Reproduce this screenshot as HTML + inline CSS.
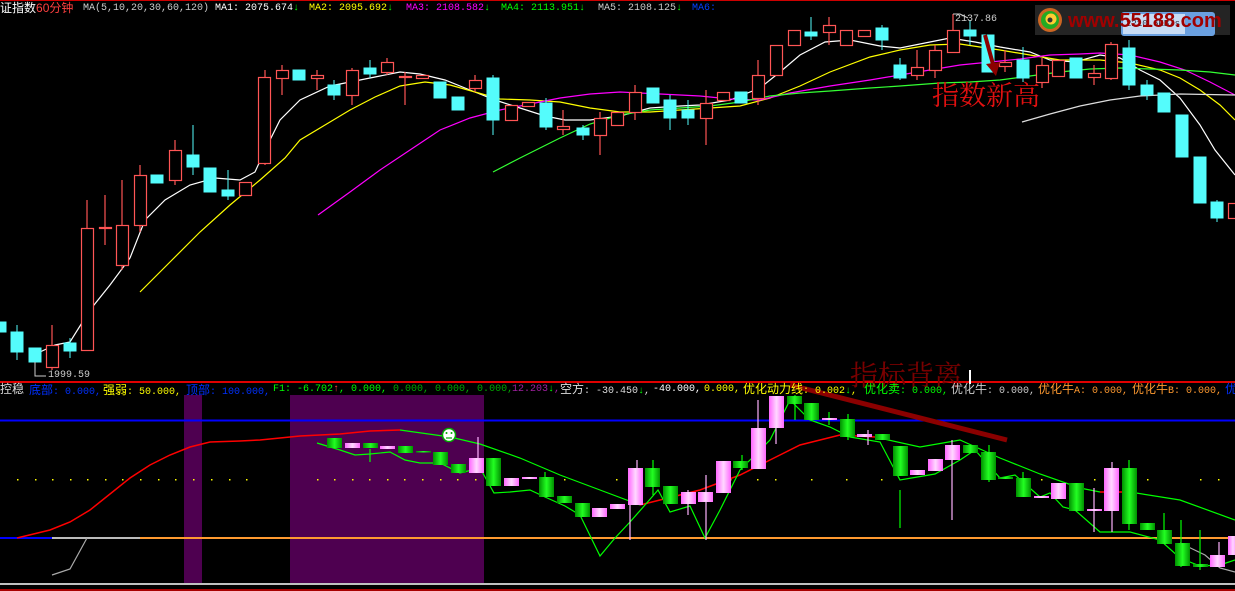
<!DOCTYPE html>
<html><head><meta charset="utf-8"><style>
html,body{margin:0;padding:0;background:#000;}
#w{position:relative;width:1235px;height:591px;overflow:hidden;background:#000;font-family:"Liberation Mono","WenQuanYi Zen Hei",monospace;font-size:10px;}
.t{position:absolute;white-space:nowrap;line-height:12px;}
.c{font-family:"Liberation Sans","WenQuanYi Zen Hei","Noto Sans CJK SC",sans-serif;font-size:12px;}
svg{position:absolute;left:0;top:0;}
</style></head><body><div id="w">
<svg width="1235" height="591" viewBox="0 0 1235 591">
<defs>
<linearGradient id="pk" x1="0" x2="1"><stop offset="0" stop-color="#ff66ff"/><stop offset="0.5" stop-color="#ffd8ff"/><stop offset="1" stop-color="#ff66ff"/></linearGradient>
<linearGradient id="gn" x1="0" x2="1"><stop offset="0" stop-color="#009000"/><stop offset="0.5" stop-color="#22ff22"/><stop offset="1" stop-color="#009000"/></linearGradient>
</defs>
<line x1="0" y1="0.5" x2="1235" y2="0.5" stroke="#c00" stroke-width="1"/>
<rect x="184" y="395" width="18" height="188" fill="#4e0050"/>
<rect x="290" y="395" width="194" height="188" fill="#4e0050"/>
<line x1="0" y1="382" x2="1235" y2="382" stroke="#e00000" stroke-width="2"/>
<line x1="0" y1="420.5" x2="1235" y2="420.5" stroke="#0000ff" stroke-width="2"/>
<line x1="0" y1="538" x2="52" y2="538" stroke="#0000ff" stroke-width="2"/>
<line x1="52" y1="538" x2="140" y2="538" stroke="#bbb" stroke-width="2"/>
<line x1="140" y1="538" x2="1235" y2="538" stroke="#ff9a30" stroke-width="2"/>
<line x1="0" y1="584" x2="1235" y2="584" stroke="#fff" stroke-width="1.5"/>
<line x1="0" y1="590" x2="1235" y2="590" stroke="#e00000" stroke-width="1.5"/>
<g fill="#ff0">
<rect x="17" y="479" width="1.5" height="1.5"/><rect x="35" y="479" width="1.5" height="1.5"/><rect x="52" y="479" width="1.5" height="1.5"/><rect x="70" y="479" width="1.5" height="1.5"/><rect x="87" y="479" width="1.5" height="1.5"/><rect x="105" y="479" width="1.5" height="1.5"/><rect x="122" y="479" width="1.5" height="1.5"/><rect x="140" y="479" width="1.5" height="1.5"/><rect x="158" y="479" width="1.5" height="1.5"/><rect x="175" y="479" width="1.5" height="1.5"/><rect x="193" y="479" width="1.5" height="1.5"/><rect x="211" y="479" width="1.5" height="1.5"/><rect x="229" y="479" width="1.5" height="1.5"/><rect x="246" y="479" width="1.5" height="1.5"/><rect x="317" y="479" width="1.5" height="1.5"/><rect x="334" y="479" width="1.5" height="1.5"/><rect x="352" y="479" width="1.5" height="1.5"/><rect x="369" y="479" width="1.5" height="1.5"/><rect x="387" y="479" width="1.5" height="1.5"/><rect x="404" y="479" width="1.5" height="1.5"/><rect x="422" y="479" width="1.5" height="1.5"/><rect x="440" y="479" width="1.5" height="1.5"/><rect x="457" y="479" width="1.5" height="1.5"/><rect x="475" y="479" width="1.5" height="1.5"/><rect x="564" y="479" width="1.5" height="1.5"/><rect x="616" y="479" width="1.5" height="1.5"/><rect x="730" y="479" width="1.5" height="1.5"/><rect x="757" y="479" width="1.5" height="1.5"/><rect x="775" y="479" width="1.5" height="1.5"/><rect x="811" y="479" width="1.5" height="1.5"/><rect x="846" y="479" width="1.5" height="1.5"/><rect x="881" y="479" width="1.5" height="1.5"/><rect x="1041" y="479" width="1.5" height="1.5"/><rect x="1094" y="479" width="1.5" height="1.5"/><rect x="1147" y="479" width="1.5" height="1.5"/><rect x="1200" y="479" width="1.5" height="1.5"/><rect x="1218" y="479" width="1.5" height="1.5"/>
</g>
<polyline fill="none" stroke="#f00" stroke-width="1.5" points="17,538 50,530 70,522 90,510 110,494 130,478 150,465 170,455 190,447 210,442 240,441 260,440 300,436 340,434 370,431 400,430"/>
<polyline fill="none" stroke="#0f0" stroke-width="1.2" points="400,430 450,437 480,444 520,458 560,475 600,490 640,505"/>
<polyline fill="none" stroke="#f00" stroke-width="1.5" points="640,505 700,490 740,475 770,460 800,445 840,435 875,437"/>
<polyline fill="none" stroke="#0f0" stroke-width="1.2" points="875,437 920,447 960,440 1000,458 1040,474 1080,488 1100,492"/>
<polyline fill="none" stroke="#f00" stroke-width="1.5" points="1100,492 1130,492"/>
<polyline fill="none" stroke="#0f0" stroke-width="1.2" points="1130,492 1180,500 1235,520"/>
<polyline fill="none" stroke="#0f0" stroke-width="1.2" points="317,443 340,450 355,455 370,454 390,452 405,460 420,463 440,463 460,473 480,468 494,493 510,492 530,490 545,497 565,506 580,515 600,556 615,538 630,522 645,505 658,490 670,512 690,506 705,538 720,510 740,470 755,455 770,440 790,400 810,420 830,427 850,437 880,442 900,480 935,474 960,460 975,450 1000,478 1015,475 1040,497 1050,493 1063,507 1075,510 1100,532 1130,532 1160,540 1180,558 1200,566 1220,565 1235,560"/>
<polyline fill="none" stroke="#aaa" stroke-width="1.2" points="52,575 70,569 87,538"/>
<polyline fill="none" stroke="#aaa" stroke-width="1.2" points="1180,543 1205,555 1220,568 1235,572"/>
<g stroke-width="1.2">
<g stroke="#ffb0ff">
<line x1="478" y1="437" x2="478" y2="473"/><line x1="630" y1="486" x2="630" y2="540"/><line x1="706" y1="475" x2="706" y2="540"/><line x1="758" y1="400" x2="758" y2="468"/><line x1="776" y1="396" x2="776" y2="444"/><line x1="1112" y1="462" x2="1112" y2="532"/><line x1="1094" y1="488" x2="1094" y2="532"/><line x1="1219" y1="542" x2="1219" y2="567"/><line x1="637" y1="460" x2="637" y2="505"/><line x1="688" y1="490" x2="688" y2="515"/><line x1="868" y1="430" x2="868" y2="445"/><line x1="952" y1="440" x2="952" y2="520"/>
</g>
<g stroke="#0f0">
<line x1="653" y1="460" x2="653" y2="495"/><line x1="742" y1="455" x2="742" y2="470"/><line x1="795" y1="395" x2="795" y2="420"/><line x1="829" y1="412" x2="829" y2="425"/><line x1="848" y1="414" x2="848" y2="440"/><line x1="900" y1="490" x2="900" y2="528"/><line x1="989" y1="445" x2="989" y2="482"/><line x1="1023" y1="472" x2="1023" y2="497"/><line x1="1129" y1="460" x2="1129" y2="530"/><line x1="1164" y1="513" x2="1164" y2="537"/><line x1="1181" y1="520" x2="1181" y2="567"/><line x1="1200" y1="530" x2="1200" y2="570"/><line x1="545" y1="472" x2="545" y2="497"/><line x1="370" y1="449" x2="370" y2="462"/>
</g>
</g>
<g fill="url(#pk)">
<rect x="345" y="443" width="15" height="5"/><rect x="380" y="446" width="15" height="3"/><rect x="469" y="458" width="15" height="15"/><rect x="504" y="478" width="15" height="8"/><rect x="522" y="477" width="15" height="2"/><rect x="592" y="508" width="15" height="9"/><rect x="610" y="504" width="15" height="5"/><rect x="628" y="468" width="15" height="37"/><rect x="681" y="492" width="15" height="12"/><rect x="698" y="492" width="15" height="10"/><rect x="716" y="461" width="15" height="32"/><rect x="751" y="428" width="15" height="41"/><rect x="769" y="396" width="15" height="32"/><rect x="857" y="434" width="15" height="3"/><rect x="910" y="470" width="15" height="5"/><rect x="928" y="459" width="15" height="12"/><rect x="945" y="445" width="15" height="15"/><rect x="1034" y="496" width="15" height="2"/><rect x="1051" y="483" width="15" height="16"/><rect x="1087" y="509" width="15" height="2"/><rect x="1104" y="468" width="15" height="43"/><rect x="1210" y="555" width="15" height="12"/><rect x="1228" y="536" width="10" height="19"/><rect x="822" y="418" width="15" height="2"/>
</g>
<g fill="url(#gn)">
<rect x="327" y="438" width="15" height="10"/><rect x="363" y="443" width="15" height="5"/><rect x="398" y="446" width="15" height="7"/><rect x="416" y="451" width="15" height="1.5"/><rect x="433" y="452" width="15" height="13"/><rect x="451" y="464" width="15" height="9"/><rect x="486" y="458" width="15" height="28"/><rect x="539" y="477" width="15" height="20"/><rect x="557" y="496" width="15" height="7"/><rect x="575" y="503" width="15" height="14"/><rect x="645" y="468" width="15" height="19"/><rect x="663" y="486" width="15" height="18"/><rect x="733" y="461" width="15" height="7"/><rect x="787" y="396" width="15" height="8"/><rect x="804" y="403" width="15" height="17"/><rect x="840" y="419" width="15" height="18"/><rect x="875" y="434" width="15" height="6"/><rect x="893" y="446" width="15" height="30"/><rect x="963" y="445" width="15" height="8"/><rect x="981" y="452" width="15" height="28"/><rect x="998" y="477" width="15" height="2"/><rect x="1016" y="478" width="15" height="19"/><rect x="1069" y="483" width="15" height="28"/><rect x="1122" y="468" width="15" height="56"/><rect x="1140" y="523" width="15" height="7"/><rect x="1157" y="530" width="15" height="14"/><rect x="1175" y="543" width="15" height="23"/><rect x="1193" y="564" width="15" height="3"/>
</g>
<circle cx="449" cy="435" r="6.5" fill="#fff" stroke="#0a0" stroke-width="1.5"/>
<circle cx="446.5" cy="433" r="1" fill="#0a0"/><circle cx="451.5" cy="433" r="1" fill="#0a0"/>
<line x1="446" y1="438" x2="452" y2="438" stroke="#0a0" stroke-width="1.2"/>
<polyline fill="none" stroke="#fff" stroke-width="1.2" points="40,352 55,345 70,342 90,310 110,285 130,258 145,220 165,200 190,185 215,178 240,180 255,172 265,150 280,120 300,100 330,86 360,80 380,76 400,72 420,74 445,80 470,90 495,100 520,108 545,116 565,120 590,120 620,116 650,108 680,106 700,105 730,100 760,88 780,72 800,55 825,42 850,40 880,46 900,48 930,42 950,38 975,42 1000,47 1030,52 1050,60 1075,62 1100,55 1120,58 1140,70 1160,80 1180,98 1200,125 1215,150 1235,175"/>
<polyline fill="none" stroke="#ff0" stroke-width="1.2" points="140,292 170,262 200,232 230,205 260,180 285,158 300,140 325,125 350,110 375,97 400,86 425,82 450,85 475,92 500,99 530,100 560,102 590,108 620,112 650,112 680,110 710,108 740,106 770,98 800,86 830,72 870,57 900,50 930,45 960,44 1000,50 1030,55 1060,60 1100,60 1130,63 1160,70 1180,78 1200,90 1220,105 1235,120"/>
<polyline fill="none" stroke="#f0f" stroke-width="1.2" points="318,215 350,192 380,170 410,150 440,130 470,118 500,110 530,104 560,98 590,94 620,92 660,94 700,96 730,99 760,100 790,93 830,86 870,80 900,75 930,70 960,65 990,62 1020,59 1050,55 1080,54 1100,53 1130,55 1160,62 1185,70 1210,82 1235,95"/>
<polyline fill="none" stroke="#3f3" stroke-width="1.2" points="493,172 520,158 560,138 590,124 620,115 650,110 680,108 710,106 740,102 770,96 800,93 830,91 870,88 900,86 940,83 970,82 1000,80 1030,76 1060,72 1090,69 1120,68 1150,69 1180,70 1210,72 1235,75"/>
<polyline fill="none" stroke="#ddd" stroke-width="1.2" points="1022,122 1050,114 1080,106 1110,100 1140,96 1180,94 1235,95"/>
<g fill="#54fcfc" stroke="#54fcfc" stroke-width="1">
<line x1="17" y1="325" x2="17" y2="360"/><line x1="70" y1="338" x2="70" y2="358"/><line x1="193" y1="125" x2="193" y2="175"/><line x1="228" y1="170" x2="228" y2="200"/><line x1="334" y1="80" x2="334" y2="100"/><line x1="370" y1="60" x2="370" y2="78"/><line x1="493" y1="75" x2="493" y2="135"/><line x1="546" y1="98" x2="546" y2="130"/><line x1="670" y1="95" x2="670" y2="130"/><line x1="688" y1="100" x2="688" y2="125"/><line x1="811" y1="17" x2="811" y2="40"/><line x1="882" y1="25" x2="882" y2="50"/><line x1="900" y1="58" x2="900" y2="80"/><line x1="970" y1="20" x2="970" y2="45"/><line x1="1023" y1="47" x2="1023" y2="82"/><line x1="1129" y1="40" x2="1129" y2="90"/><line x1="1147" y1="80" x2="1147" y2="100"/><line x1="1217" y1="200" x2="1217" y2="222"/><line x1="583" y1="125" x2="583" y2="140"/>
<rect x="-4" y="322" width="10" height="10"/><rect x="11" y="332" width="12" height="20"/><rect x="29" y="348" width="12" height="14"/><rect x="64" y="343" width="12" height="8"/><rect x="151" y="175" width="12" height="8"/><rect x="187" y="155" width="12" height="12"/><rect x="204" y="168" width="12" height="24"/><rect x="222" y="190" width="12" height="6"/><rect x="293" y="70" width="12" height="10"/><rect x="328" y="85" width="12" height="10"/><rect x="364" y="68" width="12" height="6"/><rect x="434" y="82" width="12" height="16"/><rect x="452" y="97" width="12" height="13"/><rect x="487" y="78" width="12" height="42"/><rect x="540" y="103" width="12" height="24"/><rect x="577" y="128" width="12" height="7"/><rect x="647" y="88" width="12" height="15"/><rect x="664" y="100" width="12" height="18"/><rect x="682" y="110" width="12" height="8"/><rect x="735" y="92" width="12" height="11"/><rect x="805" y="32" width="12" height="4"/><rect x="876" y="28" width="12" height="12"/><rect x="894" y="65" width="12" height="13"/><rect x="964" y="30" width="12" height="6"/><rect x="982" y="35" width="12" height="37"/><rect x="1017" y="60" width="12" height="18"/><rect x="1070" y="58" width="12" height="20"/><rect x="1123" y="48" width="12" height="37"/><rect x="1141" y="85" width="12" height="10"/><rect x="1158" y="93" width="12" height="19"/><rect x="1176" y="115" width="12" height="42"/><rect x="1194" y="157" width="12" height="46"/><rect x="1211" y="202" width="12" height="16"/>
</g>
<g fill="#000" stroke="#ff5555" stroke-width="1.2">
<line x1="52" y1="325" x2="52" y2="370"/><line x1="87" y1="200" x2="87" y2="228"/><line x1="105" y1="195" x2="105" y2="245"/><line x1="122" y1="180" x2="122" y2="270"/><line x1="140" y1="165" x2="140" y2="232"/><line x1="175" y1="140" x2="175" y2="185"/><line x1="265" y1="70" x2="265" y2="165"/><line x1="282" y1="65" x2="282" y2="95"/><line x1="317" y1="70" x2="317" y2="90"/><line x1="352" y1="68" x2="352" y2="105"/><line x1="387" y1="58" x2="387" y2="75"/><line x1="405" y1="72" x2="405" y2="105"/><line x1="475" y1="75" x2="475" y2="92"/><line x1="563" y1="110" x2="563" y2="135"/><line x1="600" y1="112" x2="600" y2="155"/><line x1="635" y1="85" x2="635" y2="120"/><line x1="706" y1="90" x2="706" y2="145"/><line x1="758" y1="60" x2="758" y2="105"/><line x1="829" y1="17" x2="829" y2="45"/><line x1="917" y1="50" x2="917" y2="80"/><line x1="935" y1="45" x2="935" y2="78"/><line x1="953" y1="14" x2="953" y2="53"/><line x1="1005" y1="50" x2="1005" y2="72"/><line x1="1042" y1="58" x2="1042" y2="88"/><line x1="1094" y1="65" x2="1094" y2="85"/><line x1="1111" y1="42" x2="1111" y2="80"/>
<rect x="46.5" y="345.5" width="12" height="22"/><rect x="81.5" y="228.5" width="12" height="122"/><rect x="99.5" y="227.5" width="12" height="1"/><rect x="116.5" y="225.5" width="12" height="40"/><rect x="134.5" y="175.5" width="12" height="50"/><rect x="169.5" y="150.5" width="12" height="30"/><rect x="239.5" y="182.5" width="12" height="13"/><rect x="258.5" y="77.5" width="12" height="86"/><rect x="276.5" y="70.5" width="12" height="8"/><rect x="311.5" y="75.5" width="12" height="3"/><rect x="346.5" y="70.5" width="12" height="25"/><rect x="381.5" y="62.5" width="12" height="10"/><rect x="399.5" y="76.5" width="12" height="1"/><rect x="416.5" y="75.5" width="12" height="3"/><rect x="469.5" y="80.5" width="12" height="8"/><rect x="505.5" y="105.5" width="12" height="15"/><rect x="522.5" y="102.5" width="12" height="4"/><rect x="557.5" y="126.5" width="12" height="3"/><rect x="594.5" y="118.5" width="12" height="17"/><rect x="611.5" y="112.5" width="12" height="13"/><rect x="629.5" y="92.5" width="12" height="20"/><rect x="700.5" y="103.5" width="12" height="15"/><rect x="717.5" y="92.5" width="12" height="8"/><rect x="752.5" y="75.5" width="12" height="23"/><rect x="770.5" y="45.5" width="12" height="30"/><rect x="788.5" y="30.5" width="12" height="15"/><rect x="823.5" y="25.5" width="12" height="7"/><rect x="840.5" y="30.5" width="12" height="15"/><rect x="858.5" y="30.5" width="12" height="6"/><rect x="911.5" y="67.5" width="12" height="8"/><rect x="929.5" y="50.5" width="12" height="20"/><rect x="947.5" y="30.5" width="12" height="22"/><rect x="999.5" y="62.5" width="12" height="4"/><rect x="1036.5" y="65.5" width="12" height="17"/><rect x="1052.5" y="60.5" width="12" height="16"/><rect x="1088.5" y="73.5" width="12" height="4"/><rect x="1105.5" y="44.5" width="12" height="34"/><rect x="1228.5" y="203.5" width="12" height="15"/>
</g>
<polyline fill="none" stroke="#ccc" stroke-width="1" points="35,362 35,376 46,376"/>
<polyline fill="none" stroke="#ccc" stroke-width="1" points="953,14 960,14 968,18"/>
<rect x="1035" y="5" width="195" height="30" fill="#262626" opacity="0.95"/>
<rect x="1121" y="12" width="94" height="24" rx="3" fill="#6aa0e0"/>
<rect x="1123" y="14" width="62" height="20" fill="#c8dcf4"/>
<circle cx="1050" cy="20" r="12" fill="#c62"/>
<circle cx="1050" cy="20" r="9" fill="#2a2"/>
<circle cx="1051" cy="19" r="5.5" fill="#fc3"/>
<circle cx="1050" cy="20" r="2.5" fill="#333"/>
<line x1="985" y1="35" x2="994" y2="68" stroke="#8b0000" stroke-width="4"/>
<polygon points="986,64 1000,62 996,76" fill="#8b0000"/>
<line x1="790" y1="385" x2="1007" y2="440" stroke="#8b0000" stroke-width="5"/>
</svg>
<div class="t" style="left:1126px;top:18px;font-size:9px;color:#334;">2210.6KB/s</div>
<div class="t" style="left:1068px;top:9px;font-size:20px;line-height:24px;font-weight:bold;color:#a00000;font-family:'Liberation Sans',sans-serif;">www.55188.com</div>
<div class="t c" style="left:932px;top:80px;font-size:27px;line-height:32px;color:#e01010;font-family:'Liberation Serif','Noto Serif CJK SC',serif;">指数新高</div>
<div class="t c" style="left:850px;top:360px;font-size:28px;line-height:34px;color:#7a0000;font-family:'Liberation Serif','Noto Serif CJK SC',serif;">指标背离</div>
<div class="t" style="left:955px;top:14px;color:#ccc;">2137.86</div>
<div class="t" style="left:48px;top:370px;color:#ccc;">1999.59</div>
<div class="t" style="left:0;top:2px;"><span class="c" style="color:#fff;">证指数</span><span class="c" style="color:#ff4040;">60分钟</span></div>
<div class="t" style="left:83px;top:3px;color:#ccc;">MA(5,10,20,30,60,120)</div>
<div class="t" style="left:215px;top:3px;color:#fff;">MA1: 2075.674<span style="color:#0f0">↓</span></div>
<div class="t" style="left:309px;top:3px;color:#ff0;">MA2: 2095.692<span style="color:#0f0">↓</span></div>
<div class="t" style="left:406px;top:3px;color:#f0f;">MA3: 2108.582<span style="color:#0f0">↓</span></div>
<div class="t" style="left:501px;top:3px;color:#0f0;">MA4: 2113.951<span style="color:#0f0">↓</span></div>
<div class="t" style="left:598px;top:3px;color:#ccc;">MA5: 2108.125<span style="color:#0f0">↓</span></div>
<div class="t" style="left:692px;top:3px;color:#0040ff;">MA6:</div>
<div class="t" style="left:0;top:383px;"><span class="c" style="color:#ddd;">控稳</span></div>
<div class="t" style="left:29px;top:384px;color:#0030ff;"><span class="c">底部</span>: 0.000,</div>
<div class="t" style="left:103px;top:384px;color:#ff0;"><span class="c">强弱</span>: 50.000,</div>
<div class="t" style="left:186px;top:384px;color:#0030ff;"><span class="c">顶部</span>: 100.000,</div>
<div class="t" style="left:273px;top:384px;color:#0f0;">F1: -6.702<span style="color:#f44">↑</span>, 0.000, <span style="color:#0a0">0.000, 0.000, 0.000,</span></div>
<div class="t" style="left:512px;top:384px;color:#a020a0;">12.203<span style="color:#0f0">↓</span>,</div>
<div class="t" style="left:560px;top:383px;color:#ddd;"><span class="c">空方</span>: -30.450<span style="color:#0f0">↓</span>,</div>
<div class="t" style="left:653px;top:384px;color:#fff;">-40.000,</div>
<div class="t" style="left:704px;top:384px;color:#ff0;">0.000,</div>
<div class="t" style="left:743px;top:383px;color:#ff0;"><span class="c">优化动力线</span>: 0.002<span style="color:#0f0">↓</span>,</div>
<div class="t" style="left:864px;top:383px;color:#0f0;"><span class="c">优化卖</span>: 0.000,</div>
<div class="t" style="left:951px;top:383px;color:#ccc;"><span class="c">优化牛</span>: 0.000,</div>
<div class="t" style="left:1038px;top:383px;color:#ff9a30;"><span class="c">优化牛</span>A: 0.000,</div>
<div class="t" style="left:1132px;top:383px;color:#ff9a30;"><span class="c">优化牛</span>B: 0.000,</div>
<div class="t" style="left:1225px;top:383px;color:#0030ff;"><span class="c">优</span></div>
<div style="position:absolute;left:969px;top:370px;width:2px;height:14px;background:#fff;"></div>
</div></body></html>
